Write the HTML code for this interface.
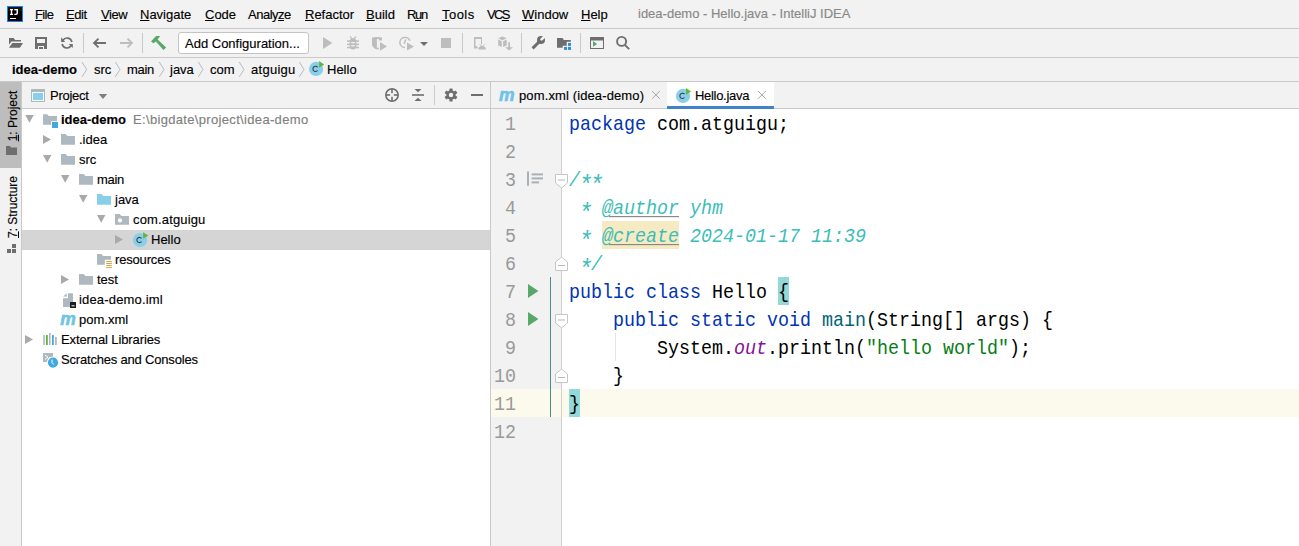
<!DOCTYPE html>
<html><head><meta charset="utf-8">
<style>
*{margin:0;padding:0;box-sizing:border-box}
html,body{width:1299px;height:546px;overflow:hidden;background:#f2f2f2}
body{position:relative;font-family:"Liberation Sans",sans-serif;font-size:13px;color:#000}
.a{position:absolute}
.t{position:absolute;white-space:pre;line-height:16px;height:16px;-webkit-text-stroke:0.15px currentColor}
.u{text-decoration:underline;text-underline-offset:1px}
.hl{position:absolute;background:#c9c9c9;height:1px}
.vl{position:absolute;background:#c9c9c9;width:1px}
svg.ov{position:absolute;left:0;top:0;width:1299px;height:546px}
.code{position:absolute;left:569px;margin-top:3px;transform:scaleY(1.07);transform-origin:0 18.9px;font-family:"Liberation Mono",monospace;font-size:18.33px;white-space:pre;line-height:28px;height:28px}
.ln{position:absolute;margin-top:3px;transform:scaleY(1.08);transform-origin:0 18.9px;font-family:"Liberation Mono",monospace;font-size:18.33px;line-height:28px;height:28px;color:#999;text-align:right;width:30px;left:486px}
.kw{color:#0033b3}
.ast{display:inline-block;transform:translateY(5px) scale(1.3)}
.cm{color:#3bbdb9;font-style:italic}
</style></head><body>
<!-- backgrounds -->
<div class="hl" style="left:0;top:28px;width:1299px"></div>
<div class="hl" style="left:0;top:57px;width:1299px"></div>
<div class="hl" style="left:0;top:81px;width:1299px"></div>
<div class="a" style="left:0;top:82px;width:21px;height:86px;background:#bdbdbd"></div>
<div class="vl" style="left:21px;top:82px;height:464px"></div>
<div class="a" style="left:22px;top:109px;width:468px;height:437px;background:#fff"></div>
<div class="hl" style="left:22px;top:108px;width:468px"></div>
<div class="a" style="left:22px;top:230px;width:468px;height:20px;background:#d5d5d5"></div>
<div class="vl" style="left:490px;top:82px;height:464px"></div>
<div class="a" style="left:562px;top:109px;width:737px;height:437px;background:#fff"></div>
<div class="a" style="left:491px;top:389px;width:808px;height:28px;background:#fcfaed"></div>
<div class="vl" style="left:561px;top:109px;height:437px;background:#d0d0d0"></div>
<div class="hl" style="left:491px;top:108px;width:808px"></div>
<div class="a" style="left:667px;top:82px;width:107px;height:26px;background:#fff"></div>
<div class="a" style="left:667px;top:106px;width:107px;height:3px;background:#4083c9"></div>
<div class="a" style="left:178px;top:32px;width:131px;height:22px;background:#fff;border:1px solid #c4c4c4;border-radius:3px"></div>
<!-- tool separators -->
<div class="vl" style="left:83px;top:33px;height:20px"></div>
<div class="vl" style="left:142px;top:33px;height:20px"></div>
<div class="vl" style="left:462px;top:33px;height:20px"></div>
<div class="vl" style="left:521px;top:33px;height:20px"></div>
<div class="vl" style="left:580px;top:33px;height:20px"></div>
<div class="vl" style="left:434px;top:85px;height:20px"></div>

<!-- MENU -->
<div class="t" style="left:35px;top:7px;letter-spacing:-0.70px"><span class="u">F</span>ile</div>
<div class="t" style="left:66px;top:7px;letter-spacing:-0.43px"><span class="u">E</span>dit</div>
<div class="t" style="left:101px;top:7px;letter-spacing:-0.40px"><span class="u">V</span>iew</div>
<div class="t" style="left:140px;top:7px"><span class="u">N</span>avigate</div>
<div class="t" style="left:205px;top:7px"><span class="u">C</span>ode</div>
<div class="t" style="left:248px;top:7px;letter-spacing:-0.50px">Analy<span class="u">z</span>e</div>
<div class="t" style="left:305px;top:7px"><span class="u">R</span>efactor</div>
<div class="t" style="left:366px;top:7px"><span class="u">B</span>uild</div>
<div class="t" style="left:407px;top:7px;letter-spacing:-1.30px">R<span class="u">u</span>n</div>
<div class="t" style="left:442px;top:7px;letter-spacing:0.45px"><span class="u">T</span>ools</div>
<div class="t" style="left:487px;top:7px;letter-spacing:-1.60px">VC<span class="u">S</span></div>
<div class="t" style="left:522px;top:7px"><span class="u">W</span>indow</div>
<div class="t" style="left:581px;top:7px"><span class="u">H</span>elp</div>
<div class="t" style="left:638px;top:6px;color:#888">idea-demo - Hello.java - IntelliJ IDEA</div>

<div class="t" style="left:185px;top:36px">Add Configuration...</div>

<!-- BREADCRUMB -->
<div class="t" style="left:12px;top:62px;font-weight:bold">idea-demo</div>
<div class="t" style="left:94px;top:62px">src</div>
<div class="t" style="left:127px;top:62px;letter-spacing:-0.30px">main</div>
<div class="t" style="left:170px;top:62px">java</div>
<div class="t" style="left:210px;top:62px">com</div>
<div class="t" style="left:251px;top:62px;letter-spacing:0.27px">atguigu</div>
<div class="t" style="left:327px;top:62px">Hello</div>

<!-- LEFT STRIP vertical labels -->
<div class="t" style="left:-13px;top:108px;transform:rotate(-90deg);transform-origin:50% 50%;width:52px;text-align:center;font-size:12px"><span class="u">1</span>: Project</div>
<div class="t" style="left:-19px;top:199px;transform:rotate(-90deg);transform-origin:50% 50%;width:64px;text-align:center;font-size:12px"><span class="u">7</span>: Structure</div>

<!-- PROJECT PANEL -->
<div class="t" style="left:50px;top:88px;letter-spacing:-0.25px">Project</div>
<div class="t" style="left:61px;top:112px;font-weight:bold">idea-demo</div>
<div class="t" style="left:133px;top:112px;color:#808080;letter-spacing:0.33px">E:\bigdate\project\idea-demo</div>
<div class="t" style="left:79px;top:132px">.idea</div>
<div class="t" style="left:79px;top:152px">src</div>
<div class="t" style="left:97px;top:172px;letter-spacing:-0.30px">main</div>
<div class="t" style="left:115px;top:192px">java</div>
<div class="t" style="left:133px;top:212px;letter-spacing:0.15px">com.atguigu</div>
<div class="t" style="left:151px;top:232px">Hello</div>
<div class="t" style="left:115px;top:252px;letter-spacing:-0.17px">resources</div>
<div class="t" style="left:97px;top:272px">test</div>
<div class="t" style="left:79px;top:292px;letter-spacing:0.17px">idea-demo.iml</div>
<div class="t" style="left:79px;top:312px">pom.xml</div>
<div class="t" style="left:61px;top:332px;letter-spacing:-0.11px">External Libraries</div>
<div class="t" style="left:61px;top:352px;letter-spacing:-0.19px">Scratches and Consoles</div>

<!-- TABS -->
<div class="t" style="left:519px;top:88px;letter-spacing:0.12px">pom.xml (idea-demo)</div>
<div class="t" style="left:695px;top:88px;letter-spacing:-0.30px">Hello.java</div>

<!-- LINE NUMBERS -->
<div class="ln" style="top:109px">1</div>
<div class="ln" style="top:137px">2</div>
<div class="ln" style="top:165px">3</div>
<div class="ln" style="top:193px">4</div>
<div class="ln" style="top:221px">5</div>
<div class="ln" style="top:249px">6</div>
<div class="ln" style="top:277px">7</div>
<div class="ln" style="top:305px">8</div>
<div class="ln" style="top:333px">9</div>
<div class="ln" style="top:361px">10</div>
<div class="ln" style="top:389px">11</div>
<div class="ln" style="top:417px">12</div>

<!-- CODE -->
<div class="a" style="left:602px;top:221px;width:77px;height:28px;background:#f6eac3"></div>
<div class="a" style="left:569px;top:277px;width:11px;height:28px;background:#93d9d9;left:778px"></div>
<div class="a" style="left:569px;top:389px;width:11px;height:28px;background:#93d9d9"></div>
<div class="code" style="top:109px"><span class="kw">package</span> com.atguigu;</div>
<div class="code cm" style="top:165px">/<span class="ast">*</span><span class="ast">*</span></div>
<div class="code cm" style="top:193px"> <span class="ast">*</span> <u style="text-decoration-color:#808080;text-underline-offset:2px">@author</u> yhm</div>
<div class="code cm" style="top:221px"> <span class="ast">*</span> <u style="text-decoration-color:#808080;text-underline-offset:2px">@create</u> 2024-01-17 11:39</div>
<div class="code cm" style="top:249px"> <span class="ast">*</span>/</div>
<div class="code" style="top:277px"><span class="kw">public class</span> Hello {</div>
<div class="code" style="top:305px">    <span class="kw">public static void</span> <span style="color:#00627a">main</span>(String[] args) {</div>
<div class="code" style="top:333px">        System.<i style="color:#871094">out</i>.println(<span style="color:#067d17">"hello world"</span>);</div>
<div class="code" style="top:361px">    }</div>
<div class="code" style="top:389px">}</div>

<svg class="ov" viewBox="0 0 1299 546">
<!-- IJ logo -->
<rect x="7" y="6" width="16" height="16" fill="#1a7ff0"/>
<rect x="8" y="7" width="14" height="14" fill="#000"/>
<rect x="8" y="7" width="14" height="4" fill="#2a1e12" opacity="0.6"/>
<path d="M10 9h3v1.3h-0.8v3.4h0.8v1.3h-3v-1.3h0.8v-3.4h-0.8z" fill="#fff"/>
<path d="M14.3 9h3.7v4.1c0 1.2-0.8 1.9-2 1.9h-1.7v-1.3h1.4c0.5 0 0.8-0.3 0.8-0.8v-2.6h-2.2z" fill="#fff"/>
<rect x="10" y="18" width="6" height="1" fill="#fff"/>

<!-- toolbar -->
<g fill="#6e6e6e">
 <path d="M9 38h4.8l1.2 2h6v1.6h-9.6l-2.4 3.2z"/>
 <path d="M12.3 43.1h10.7l-3.1 4.6h-10.9z"/>
 <path fill-rule="evenodd" d="M35 37h12v12h-3v-3h-6v3h-3zM37 39v4h8v-4z"/>
 <rect x="39" y="47" width="4" height="2"/>
</g>
<g fill="none" stroke="#6e6e6e" stroke-width="1.6">
 <path d="M62.9 40.2A5 5 0 0 1 71.9 42"/>
 <path d="M62.1 44A5 5 0 0 0 71.1 45.8"/>
</g>
<path d="M61.1 37.3L65.2 41.9H61.1Z" fill="#6e6e6e"/>
<path d="M72.8 47.9L68.7 43.9H72.8Z" fill="#6e6e6e"/>
<g fill="none" stroke-width="1.8" stroke-linecap="butt">
 <path d="M106 43h-12M98.5 38.6l-4.5 4.4 4.5 4.4" stroke="#6e6e6e"/>
 <path d="M120 43h12M127.5 38.6l4.5 4.4-4.5 4.4" stroke="#bdbdbd"/>
</g>
<path fill="#59a869" d="M156 36.1H160.2L157.6 39.4L166.2 47.4L163.4 49.9L155.9 41.4L153.5 43.3L151 41.6Z"/>
<!-- run/debug disabled -->
<g fill="#bdbdbd">
 <path d="M323 37v12l9.4-6z"/>
 <path d="M349.7 41.5c0-2 1.4-3.2 3.3-3.2s3.3 1.2 3.3 3.2v5c0 1.8-1.4 3-3.3 3s-3.3-1.2-3.3-3z"/>
 <rect x="347" y="40.3" width="12" height="1.5"/>
 <rect x="347" y="43.6" width="12" height="1.5"/>
 <rect x="347" y="46.8" width="12" height="1.5"/>
 <path d="M350.6 36l1.7 2.5h1.4l1.7-2.5 1 0.7-1.9 2.8h-3l-1.9-2.8z"/>
 <rect x="351.2" y="42" width="3.6" height="1.3" fill="#f2f2f2"/>
 <rect x="351.2" y="45.1" width="3.6" height="1.3" fill="#f2f2f2"/>
 <path d="M372 37.6c3-0.8 7-0.8 10 0v3h-3.1v-1.6h-2v8.8h2v-0.6h0.1v1.6c-0.5 0.4-1.2 0.7-2.1 0.7c-2.5-0.6-4.9-2.6-4.9-5.5z"/>
 <path d="M380 42.1v8.7l7-4.3z"/>
 <path d="M407 42.6v8l7-4z"/>
 <rect x="441" y="38" width="10" height="10"/>
</g>
<g fill="none" stroke="#bdbdbd" stroke-width="1.5">
 <path d="M405 47.6A5.1 5.1 0 1 1 409.8 40.8"/>
 <path d="M405.8 39.6L404.1 44.1"/>
</g>
<g fill="#bdbdbd">
 <path d="M420 42h8l-4 4z" fill="#6e6e6e"/>
 <path d="M474 37H482V44.5H481V39H475.5V46.3H477.5V48.5H474Z"/>
 <path d="M478.2 49.6C478.6 47 480.2 45.8 482.1 45.8S485.6 47 486 49.6Z"/>
 <path d="M479.6 44.2l1.2 1.6M484.6 44.2l-1.2 1.6" stroke="#bdbdbd" stroke-width="0.9"/>
 <path d="M502.4 36.5l4.3 1.8-4.3 1.9-4.3-1.9z"/>
 <path d="M498.2 39.6l3.6 1.6v5.8l-3.6-1.6z"/>
 <path d="M506.7 39.6l-3.6 1.6v5.8l3.6-1.6z"/>
 <path d="M508.2 42.2h1.8v5h3l-3.9 3.4-3.9-3.4h3z"/>
</g>
<g fill="#6e6e6e">
 <circle cx="541" cy="39.9" r="4"/>
 <path d="M532.6 48.4L539.2 41.8" stroke="#6e6e6e" stroke-width="3" stroke-linecap="butt"/>
 <path d="M557 38.1h5.6l1.2 1.9h7v1.8h-4.1v3.9h-4v2.1h-5.7z"/>
</g>
<path d="M541.6 39.4L545.6 35.4" stroke="#f2f2f2" stroke-width="2.7" stroke-linecap="round"/>
<g fill="#2f8fd2">
 <rect x="568" y="42.9" width="3" height="3"/>
 <rect x="564" y="46.9" width="3" height="3"/>
 <rect x="568" y="46.9" width="3" height="3"/>
</g>
<rect x="564" y="42.7" width="4" height="3.6" fill="#f2f2f2" opacity="0"/>
<g fill="#6e6e6e">
 <path fill-rule="evenodd" d="M590 37h14v12h-14zM591 40.5v7.5h12v-7.5z"/>
</g>
<path d="M593 41v5.8l4.1-2.9z" fill="#59a869"/>
<g fill="none" stroke="#6e6e6e" stroke-width="1.9">
 <circle cx="621.6" cy="41.4" r="4.5"/>
 <path d="M624.8 44.8l4.4 4.4"/>
</g>

<!-- breadcrumb chevrons -->
<g fill="none" stroke="#b4bbc0" stroke-width="1">
 <path d="M82 62l4.7 7.5-4.7 7.3"/>
 <path d="M115.3 62l4.7 7.5-4.7 7.3"/>
 <path d="M159.3 62l4.7 7.5-4.7 7.3"/>
 <path d="M198.3 62l4.7 7.5-4.7 7.3"/>
 <path d="M239.3 62l4.7 7.5-4.7 7.3"/>
 <path d="M299.3 62l4.7 7.5-4.7 7.3"/>
</g>
<!-- class icon breadcrumb -->
<g id="cls">
 <circle cx="316.1" cy="68.9" r="7.1" fill="#87cfea"/>
 <path d="M317.6 67.3a2.6 2.6 0 1 0 0 3.2" fill="none" stroke="#3d3d3d" stroke-width="1.05"/>
 <path d="M319.1 61v6.7l5.1-3.3z" fill="#62b543"/>
</g>

<!-- left strip icons -->
<path d="M6 146h4l1 1.5h6v7.5h-11z" fill="#6e6e6e"/>
<g fill="#6e6e6e">
 <rect x="7" y="249" width="4" height="4"/>
 <rect x="12" y="249" width="4" height="4"/>
 <rect x="12" y="244" width="4" height="4"/>
</g>

<!-- project header -->
<rect x="31" y="89" width="14" height="13" fill="#aeb8c0"/>
<rect x="32" y="92" width="12" height="9" fill="#fff"/>
<rect x="33" y="93" width="10" height="7" fill="#87cfea"/>
<path d="M98.8 94h8.4l-4.2 4.9z" fill="#7f7f7f"/>
<g fill="none" stroke="#6e6e6e" stroke-width="1.6">
 <circle cx="392" cy="95" r="6.2"/>
</g>
<g fill="#6e6e6e">
 <rect x="391.2" y="89" width="1.6" height="4.2"/>
 <rect x="391.2" y="96.8" width="1.6" height="4.2"/>
 <rect x="386" y="94.2" width="4.2" height="1.6"/>
 <rect x="393.8" y="94.2" width="4.2" height="1.6"/>
 <rect x="412" y="94.2" width="12" height="1.6"/>
 <path d="M414.5 89h7l-3.5 3.3z"/>
 <path d="M414.5 101h7l-3.5-3.3z"/>
 <rect x="471" y="94" width="12" height="2"/>
</g>
<g transform="translate(451,95)" fill="#6e6e6e">
 <circle r="4.7"/>
 <rect x="-1.6" y="-6.5" width="3.2" height="13" rx="0.6"/>
 <rect x="-1.6" y="-6.5" width="3.2" height="13" rx="0.6" transform="rotate(60)"/>
 <rect x="-1.6" y="-6.5" width="3.2" height="13" rx="0.6" transform="rotate(120)"/>
 <circle r="2.2" fill="#f2f2f2"/>
</g>

<!-- tree triangles -->
<g fill="#a9a9a9">
 <path d="M25.3 115h8.4l-4.2 7.8z"/>
 <path d="M43 135v9l8-4.5z"/>
 <path d="M43 155h8.4l-4.2 7.8z"/>
 <path d="M61 175h8.4l-4.2 7.8z"/>
 <path d="M79 195h8.4l-4.2 7.8z"/>
 <path d="M97 215h8.4l-4.2 7.8z"/>
 <path d="M115 235v9l8-4.5z"/>
 <path d="M61 275v9l8-4.5z"/>
 <path d="M25 335v9l8-4.5z"/>
</g>
<!-- tree icons -->
<g fill="#aeb8c0">
 <path d="M43 114.2h4.3l1.5 1.8h8.2v5.2h-6v3.5h-8z"/>
 <path d="M61 134h4.5l2 2h7.5v8.8h-14z"/>
 <path d="M61 154h4.5l2 2h7.5v8.8h-14z"/>
 <path d="M79 174h4.5l2 2h7.5v8.8h-14z"/>
 <path d="M97 254h4.4l1.6 2h8v3.8h-6.2v5h-7.8z"/>
 <path d="M79 274h4.5l2 2h7.5v8.8h-14z"/>
 <path d="M43 353h10v4h-4v5h-6z"/>
</g>
<rect x="52" y="122" width="6" height="6" fill="#40a9df"/>
<path d="M97 194h4.5l2 2h7.5v8.8h-14z" fill="#87cfea"/>
<path d="M115 214h4.5l2 2h7.5v8.8h-14z" fill="#aeb8c0"/>
<circle cx="120" cy="220.4" r="2.1" fill="#fff"/>
<g fill="#dba444">
 <rect x="106" y="261" width="6" height="1.1" rx="0.5"/>
 <rect x="106" y="263" width="6" height="1.1" rx="0.5"/>
 <rect x="106" y="265" width="6" height="1.1" rx="0.5"/>
 <rect x="106" y="267" width="6" height="1.1" rx="0.5"/>
</g>
<!-- Hello class icon in tree -->
<circle cx="140" cy="240" r="7.1" fill="#87cfea"/>
<path d="M141.5 238.4a2.6 2.6 0 1 0 0 3.2" fill="none" stroke="#3d3d3d" stroke-width="1.05"/>
<path d="M143.1 232.2v6.6l5.2-3.3z" fill="#62b543"/>
<!-- iml -->
<path d="M63.1 296.6L66.8 293.3V296.6Z" fill="#aeb8c0"/>
<path d="M68 293.3h5v8.7h-3v5h-7v-8.8h5z" fill="#aeb8c0"/>
<rect x="70" y="302" width="6" height="6" fill="#1e1e1e"/>
<rect x="71.5" y="305.3" width="3" height="1" fill="#fff"/>
<!-- m icons -->
<text x="60.2" y="324.8" font-family="Liberation Sans" font-weight="bold" font-style="italic" font-size="17.5" fill="#6fc3e6" stroke="#6fc3e6" stroke-width="0.6">m</text>
<text x="498.9" y="101.2" font-family="Liberation Sans" font-weight="bold" font-style="italic" font-size="17.5" fill="#6fc3e6" stroke="#6fc3e6" stroke-width="0.6">m</text>
<!-- external libs -->
<rect x="43.2" y="335" width="1.6" height="10" fill="#aeb8c0"/>
<rect x="46" y="335" width="1.8" height="10" fill="#5fb832"/>
<rect x="49" y="333" width="1.6" height="12" fill="#aeb8c0"/>
<rect x="52" y="335" width="1.8" height="10" fill="#40a9df"/>
<rect x="55" y="337" width="1.8" height="8" fill="#aeb8c0"/>
<!-- scratches -->
<path d="M45 355l3 2.2-3 2.2" fill="none" stroke="#fff" stroke-width="1"/>
<circle cx="53" cy="362.6" r="6.2" fill="#fff"/>
<circle cx="53" cy="362.6" r="5.1" fill="#40a9df"/>
<path d="M52 359.5v3.2l1.8 1.8" fill="none" stroke="#fff" stroke-width="1"/>

<!-- tabs -->
<g fill="none" stroke="#a8a8a8" stroke-width="1">
 <path d="M652 91l7.8 7.8M659.8 91l-7.8 7.8"/>
 <path d="M758 91l7.8 7.8M765.8 91l-7.8 7.8"/>
</g>
<circle cx="683" cy="95.9" r="7.1" fill="#87cfea"/>
<path d="M684.5 94.3a2.6 2.6 0 1 0 0 3.2" fill="none" stroke="#3d3d3d" stroke-width="1.05"/>
<path d="M686 87.9v6.9l5-3.4z" fill="#62b543"/>

<!-- gutter -->
<g fill="#aab0b5">
 <rect x="527" y="171.5" width="2" height="14.3"/>
 <rect x="531.6" y="173.4" width="11.4" height="2"/>
 <rect x="531.6" y="177.4" width="11.4" height="2"/>
 <rect x="531.6" y="181.4" width="7.5" height="2"/>
</g>
<g fill="#fff" stroke="#c6c6c6" stroke-width="1">
 <path d="M555.5 174.5h12v8.5l-6 5-6-5z"/>
 <path d="M555.5 270.5h12v-8.5l-6-5-6 5z"/>
 <path d="M555.5 314.5h12v8.5l-6 5-6-5z"/>
 <path d="M555.5 382.5h12v-8.5l-6-5-6 5z"/>
</g>
<g fill="#b8b8b8">
 <rect x="558" y="179.5" width="7" height="1"/>
 <rect x="558" y="265" width="7" height="1"/>
 <rect x="558" y="319.5" width="7" height="1"/>
 <rect x="558" y="377" width="7" height="1"/>
</g>
<path d="M528 284v14l10.4-7z" fill="#59a869"/>
<path d="M528 312v14l10.4-7z" fill="#59a869"/>
<rect x="550" y="277" width="1" height="140" fill="#4f8a8b"/>
<rect x="615" y="333" width="1" height="28" fill="#e4e4e4"/>
</svg>
</body></html>
